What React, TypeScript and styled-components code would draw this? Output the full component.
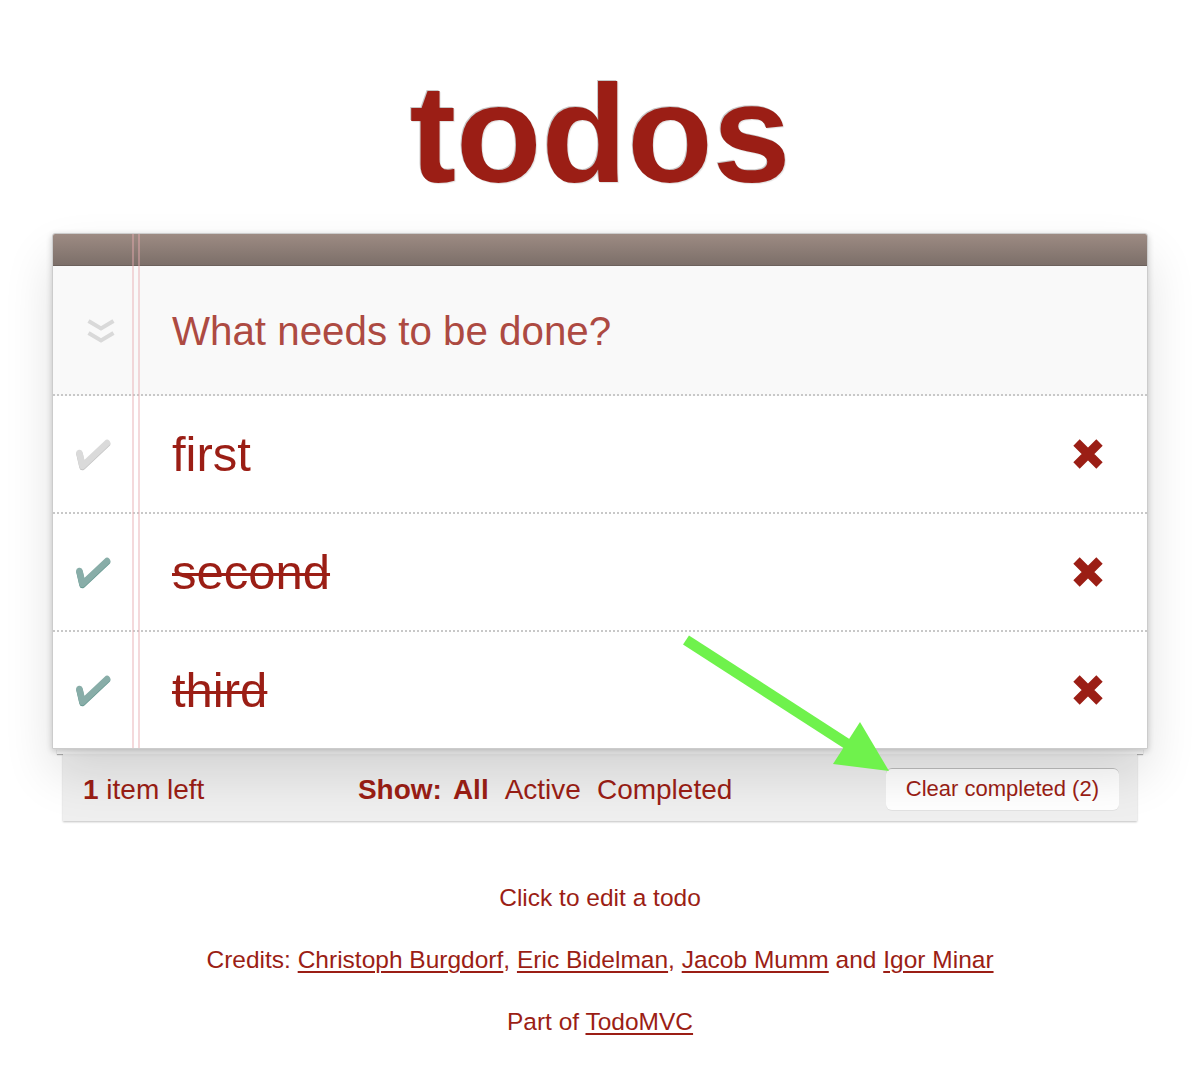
import React from "react";
import styled, { createGlobalStyle } from "styled-components";

const RED = "#9b1e15";

const Global = createGlobalStyle`
  html, body { margin: 0; padding: 0; background: #fff; }
  body { font-family: "Liberation Sans", Arial, Helvetica, sans-serif; color: ${RED}; }
`;

const Root = styled.div`
  position: relative;
  width: 1196px;
  min-height: 1090px;
`;

const Page = styled.div`
  width: 1096px;
  margin-left: 52px;
`;

const Title = styled.h1`
  margin: 0 0 29px;
  padding-top: 64px;
  font-size: 140px;
  line-height: 140px;
  font-weight: bold;
  text-align: center;
  color: ${RED};
  text-shadow: -1px -1px 0 rgba(0, 0, 0, 0.22), 1px 1px 1px rgba(0, 0, 0, 0.12);
`;

const Board = styled.section`
  position: relative;
  background: #fff;
  border: 1px solid #ccc;
  border-radius: 3px 3px 0 0;
  box-shadow: 0 2px 6px 0 rgba(0, 0, 0, 0.2), 0 25px 50px 0 rgba(0, 0, 0, 0.12);
  &::before {
    content: "";
    position: absolute;
    top: 0;
    bottom: 0;
    left: 79px;
    width: 4px;
    border-left: 2px solid rgba(230, 170, 175, 0.45);
    border-right: 2px solid rgba(230, 170, 175, 0.45);
    z-index: 3;
    pointer-events: none;
  }
`;

const HeaderBar = styled.div`
  height: 31px;
  border-bottom: 1px solid #6c615c;
  border-radius: 2px 2px 0 0;
  background: linear-gradient(to bottom, #9d8b83, #7c6f69);
`;

const Row = styled.div<{ $last?: boolean; $tall?: boolean; $shade?: boolean }>`
  display: flex;
  align-items: center;
  height: ${(p) => (p.$tall ? 128 : 116)}px;
  border-bottom: ${(p) => (p.$last ? "none" : "2px dotted #c8c8c8")};
  background: ${(p) => (p.$shade ? "#f9f9f9" : "#fff")};
`;

const ToggleCell = styled.div<{ $shift?: number; $drop?: number }>`
  width: 79px;
  flex: none;
  display: flex;
  justify-content: center;
  padding-left: ${(p) => p.$shift ?? 0}px;
  padding-top: ${(p) => p.$drop ?? 0}px;
  box-sizing: border-box;
`;

const Placeholder = styled.div`
  flex: 1;
  padding-left: 40px;
  padding-top: 3px;
  font-size: 40.3px;
  color: #ad4a42;
`;

const Label = styled.div<{ $done?: boolean }>`
  flex: 1;
  padding-left: 40px;
  font-size: 49px;
  color: ${RED};
  text-decoration: ${(p) => (p.$done ? "line-through" : "none")};
  text-decoration-thickness: 3px;
`;

const Destroy = styled.div`
  flex: none;
  width: 30px;
  height: 31px;
  margin-right: 44px;
  display: flex;
  align-items: center;
  justify-content: center;
`;

const Sheet = styled.div`
  height: 5px;
  margin: 0 5px;
  background: #fff;
  box-shadow: 0 1px 1px rgba(0, 0, 0, 0.3);
`;

const Footer = styled.footer`
  height: 67px;
  margin: 0 11px 0 11px;
  padding: 0 18px 0 20px;
  display: flex;
  align-items: center;
  justify-content: space-between;
  background: #efefef;
  box-shadow: 0 1px 2px rgba(0, 0, 0, 0.25);
  font-size: 28px;
  color: ${RED};
`;

const Count = styled.span`
  margin-top: 5px;
  strong { font-weight: bold; }
`;

const Filters = styled.div`
  display: flex;
  align-items: baseline;
  margin-top: 5px;
`;

const FilterLabel = styled.span`
  font-weight: bold;
`;

const Filter = styled.a<{ $active?: boolean; $gap: number }>`
  margin-left: ${(p) => p.$gap}px;
  color: ${RED};
  text-decoration: none;
  font-weight: ${(p) => (p.$active ? "bold" : "normal")};
`;

const ClearButton = styled.button`
  height: 42px;
  margin-top: 2px;
  padding: 0 20px;
  border: none;
  border-top: 1px solid #bdbdbd;
  border-radius: 6px;
  background: #fff;
  font-family: inherit;
  font-size: 22px;
  color: ${RED};
  box-shadow: 0 1px 0 rgba(0, 0, 0, 0.05);
`;

const Info = styled.div`
  margin-top: 46px;
  text-align: center;
  font-size: 24.5px;
  color: ${RED};
  p {
    margin: 0;
    line-height: 62px;
  }
  a {
    color: ${RED};
    text-decoration: underline;
    text-decoration-thickness: 2px;
    text-underline-offset: 3px;
  }
`;

const Arrow = styled.svg`
  position: absolute;
  left: 670px;
  top: 625px;
  width: 230px;
  height: 155px;
  pointer-events: none;
  overflow: visible;
`;

const Check = ({ done }: { done: boolean }) => (
  <svg width="36" height="34" viewBox="0 0 36 34">
    <path
      d="M4.5 16 L7.5 29 L32 6"
      fill="none"
      stroke={done ? "#669991" : "#c4c4c4"}
      strokeWidth={6.5}
      strokeLinecap="round"
      strokeLinejoin="round"
      transform="translate(0 1)"
    />
    <path
      d="M4.5 16 L7.5 29 L32 6"
      fill="none"
      stroke={done ? "#88ada8" : "#dadada"}
      strokeWidth={6.5}
      strokeLinecap="round"
      strokeLinejoin="round"
    />
  </svg>
);

const Chevrons = () => (
  <svg width="28" height="26" viewBox="0 0 28 26">
    <path d="M1.5 2 L14 9.5 L26.5 2" fill="none" stroke="#d9d9d9" strokeWidth={4} />
    <path d="M1.5 14 L14 21.5 L26.5 14" fill="none" stroke="#d9d9d9" strokeWidth={4} />
  </svg>
);

const Cross = () => (
  <svg width="30" height="30" viewBox="0 0 30 30">
    <path d="M3.5 3.5 L26.5 26.5 M26.5 3.5 L3.5 26.5" stroke={RED} strokeWidth={9} strokeLinecap="butt" />
  </svg>
);

const todos = [
  { title: "first", done: false },
  { title: "second", done: true },
  { title: "third", done: true },
];

export default function App() {
  return (
    <Root>
      <Global />
      <Page>
        <Title>todos</Title>
        <Board>
          <HeaderBar />
          <Row $tall $shade>
            <ToggleCell $shift={16} $drop={4}>
              <Chevrons />
            </ToggleCell>
            <Placeholder>What needs to be done?</Placeholder>
          </Row>
          {todos.map((t, i) => (
            <Row key={t.title} $last={i === todos.length - 1}>
              <ToggleCell>
                <Check done={t.done} />
              </ToggleCell>
              <Label $done={t.done}>{t.title}</Label>
              <Destroy>
                <Cross />
              </Destroy>
            </Row>
          ))}
        </Board>
        <Sheet />
        <Footer>
          <Count>
            <strong>1</strong> item left
          </Count>
          <Filters>
            <FilterLabel>Show:</FilterLabel>
            <Filter $gap={11} $active href="#/">All</Filter>
            <Filter $gap={16} href="#/active">Active</Filter>
            <Filter $gap={16} href="#/completed">Completed</Filter>
          </Filters>
          <ClearButton>Clear completed (2)</ClearButton>
        </Footer>
        <Info>
          <p>Click to edit a todo</p>
          <p>
            Credits: <a href="#">Christoph Burgdorf</a>, <a href="#">Eric Bidelman</a>,{" "}
            <a href="#">Jacob Mumm</a> and <a href="#">Igor Minar</a>
          </p>
          <p>
            Part of <a href="#">TodoMVC</a>
          </p>
        </Info>
      </Page>
      <Arrow viewBox="670 625 230 155">
        <line x1="686" y1="640" x2="848" y2="744.5" stroke="#6ff24c" strokeWidth={11} />
        <polygon points="833,764 860,722 889,771" fill="#6ff24c" />
      </Arrow>
    </Root>
  );
}
